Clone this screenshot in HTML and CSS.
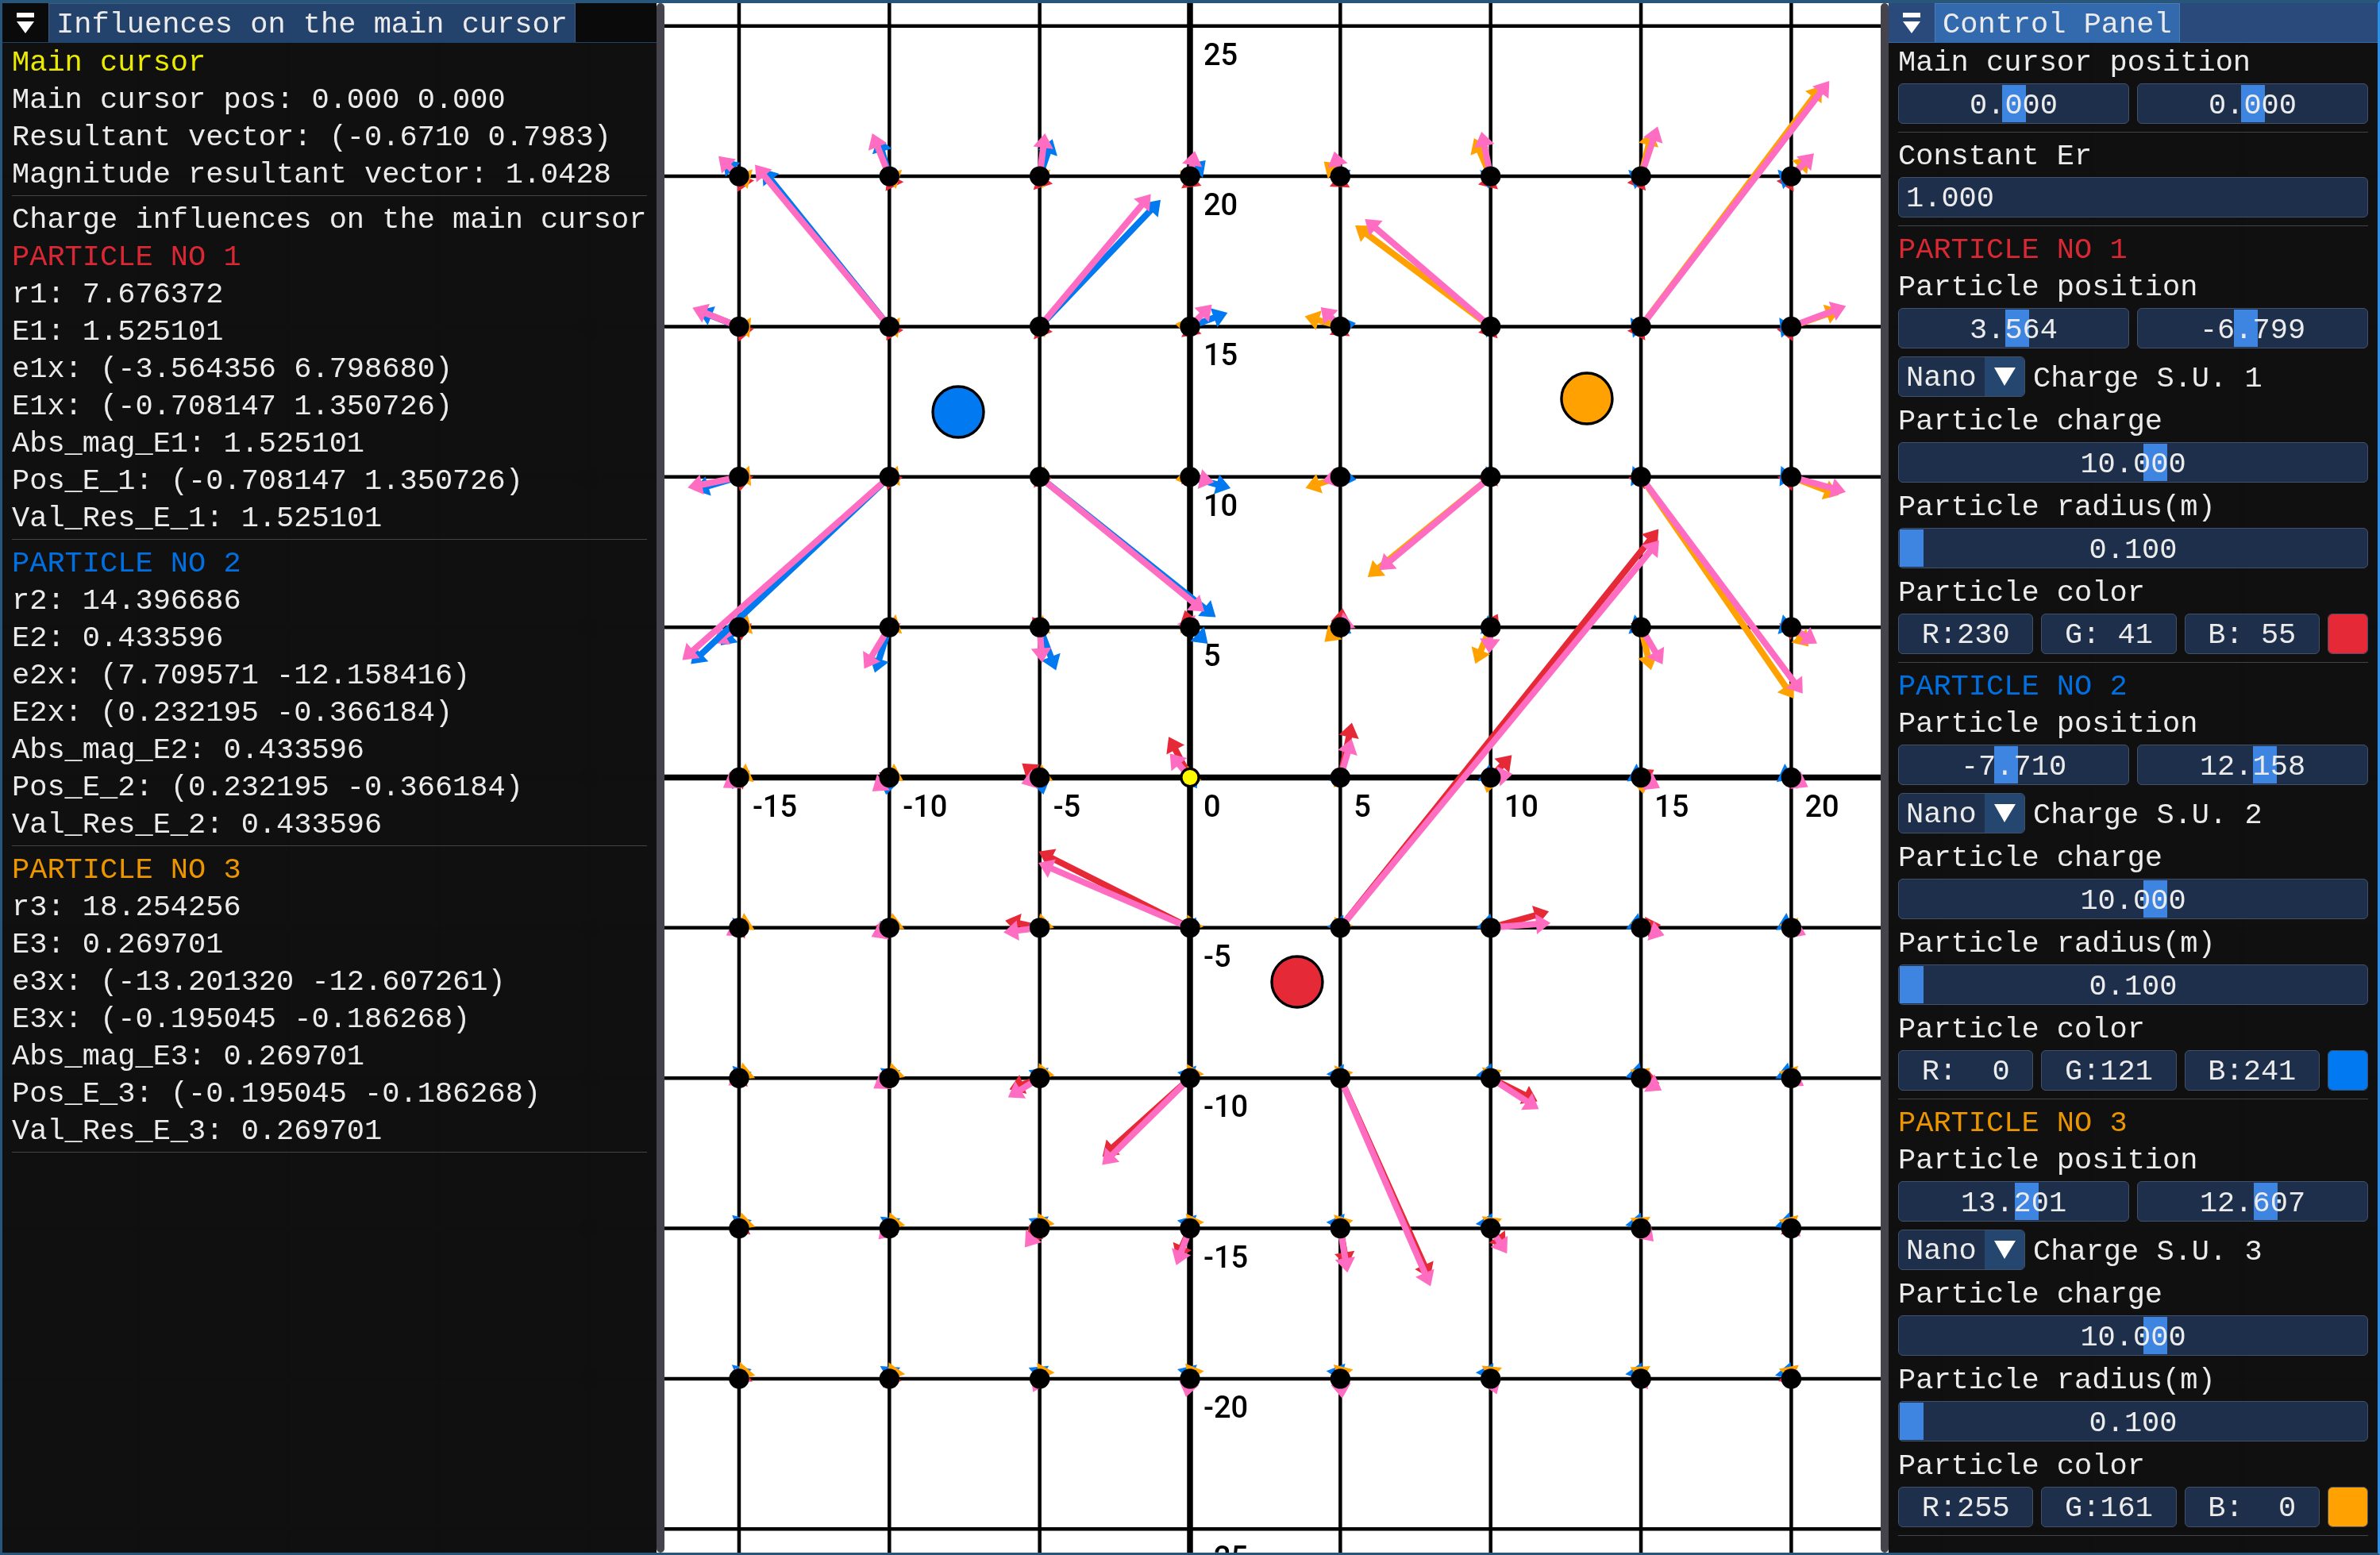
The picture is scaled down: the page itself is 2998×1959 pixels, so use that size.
FILE: index.html
```html
<!DOCTYPE html>
<html lang="en">
<head>
<meta charset="utf-8">
<title>Electric field</title>
<link rel="stylesheet" href="styles.css">
</head>
<body>
<svg class="field" id="field" role="img" aria-label="Electric field of three charges"></svg>
<main class="dock">
  <section class="panel">
    <header class="titlebar">
      <button class="menu" aria-label="Window menu"><svg width="22" height="26" viewBox="0 0 22 26"><path d="M0 0h22v6H0zM0 11h22L11 26z" fill="#fff"/></svg></button>
      <button class="tab">Influences on the main cursor</button>
    </header>
    <div class="content">
      <p class="yellow">Main cursor</p>
      <p>Main cursor pos: 0.000 0.000</p>
      <p>Resultant vector: (-0.6710 0.7983)</p>
      <p>Magnitude resultant vector: 1.0428</p>
      <hr>
      <p>Charge influences on the main cursor</p>
      <p class="red">PARTICLE NO 1</p>
      <p>r1: 7.676372</p>
      <p>E1: 1.525101</p>
      <p>e1x: (-3.564356 6.798680)</p>
      <p>E1x: (-0.708147 1.350726)</p>
      <p>Abs_mag_E1: 1.525101</p>
      <p>Pos_E_1: (-0.708147 1.350726)</p>
      <p>Val_Res_E_1: 1.525101</p>
      <hr>
      <p class="blue">PARTICLE NO 2</p>
      <p>r2: 14.396686</p>
      <p>E2: 0.433596</p>
      <p>e2x: (7.709571 -12.158416)</p>
      <p>E2x: (0.232195 -0.366184)</p>
      <p>Abs_mag_E2: 0.433596</p>
      <p>Pos_E_2: (0.232195 -0.366184)</p>
      <p>Val_Res_E_2: 0.433596</p>
      <hr>
      <p class="orange">PARTICLE NO 3</p>
      <p>r3: 18.254256</p>
      <p>E3: 0.269701</p>
      <p>e3x: (-13.201320 -12.607261)</p>
      <p>E3x: (-0.195045 -0.186268)</p>
      <p>Abs_mag_E3: 0.269701</p>
      <p>Pos_E_3: (-0.195045 -0.186268)</p>
      <p>Val_Res_E_3: 0.269701</p>
      <hr>
    </div>
  </section>
  <div class="splitter"></div>
  <div class="view"></div>
  <div class="splitter"></div>
  <section class="panel active">
    <header class="titlebar">
      <button class="menu" aria-label="Window menu"><svg width="22" height="26" viewBox="0 0 22 26"><path d="M0 0h22v6H0zM0 11h22L11 26z" fill="#fff"/></svg></button>
      <button class="tab">Control Panel</button>
    </header>
    <form class="content">
      <label for="cx">Main cursor position</label>
      <div class="pair">
        <div class="slider"><input id="cx" type="range" min="-100" max="100" step="0.001" value="0"><output for="cx">0.000</output></div>
        <div class="slider"><input id="cy" aria-label="Main cursor y" type="range" min="-100" max="100" step="0.001" value="0"><output for="cy">0.000</output></div>
      </div>
      <hr>
      <label for="er">Constant Er</label>
      <input id="er" class="box" type="text" value="1.000">
      <hr>

      <p class="red">PARTICLE NO 1</p>
      <label for="x1">Particle position</label>
      <div class="pair">
        <div class="slider"><input id="x1" type="range" min="-100" max="100" step="0.001" value="3.564"><output for="x1">3.564</output></div>
        <div class="slider"><input id="y1" aria-label="Particle 1 y" type="range" min="-100" max="100" step="0.001" value="-6.799"><output for="y1">-6.799</output></div>
      </div>
      <div class="unit">
        <div class="combo"><select id="u1"><option>Nano</option></select><svg class="arrow" viewBox="0 0 50 49"><path d="M12 13h27L25 36z" fill="#fff"/></svg></div>
        <label for="u1">Charge S.U. 1</label>
      </div>
      <label for="q1">Particle charge</label>
      <div class="slider"><input id="q1" type="range" min="-100" max="100" step="0.001" value="10"><output for="q1">10.000</output></div>
      <label for="r1">Particle radius(m)</label>
      <div class="slider"><input id="r1" type="range" min="0.1" max="10" step="0.001" value="0.1"><output for="r1">0.100</output></div>
      <label for="c1">Particle color</label>
      <div class="color">
        <input class="box" aria-label="Red" value="R:230"><input class="box" aria-label="Green" value="G: 41"><input class="box" aria-label="Blue" value="B: 55">
        <input id="c1" class="swatch" type="color" value="#e62937">
      </div>
      <hr>

      <p class="blue">PARTICLE NO 2</p>
      <label for="x2">Particle position</label>
      <div class="pair">
        <div class="slider"><input id="x2" type="range" min="-100" max="100" step="0.001" value="-7.71"><output for="x2">-7.710</output></div>
        <div class="slider"><input id="y2" aria-label="Particle 2 y" type="range" min="-100" max="100" step="0.001" value="12.158"><output for="y2">12.158</output></div>
      </div>
      <div class="unit">
        <div class="combo"><select id="u2"><option>Nano</option></select><svg class="arrow" viewBox="0 0 50 49"><path d="M12 13h27L25 36z" fill="#fff"/></svg></div>
        <label for="u2">Charge S.U. 2</label>
      </div>
      <label for="q2">Particle charge</label>
      <div class="slider"><input id="q2" type="range" min="-100" max="100" step="0.001" value="10"><output for="q2">10.000</output></div>
      <label for="r2">Particle radius(m)</label>
      <div class="slider"><input id="r2" type="range" min="0.1" max="10" step="0.001" value="0.1"><output for="r2">0.100</output></div>
      <label for="c2">Particle color</label>
      <div class="color">
        <input class="box" aria-label="Red" value="R:  0"><input class="box" aria-label="Green" value="G:121"><input class="box" aria-label="Blue" value="B:241">
        <input id="c2" class="swatch" type="color" value="#0079f1">
      </div>
      <hr>

      <p class="orange">PARTICLE NO 3</p>
      <label for="x3">Particle position</label>
      <div class="pair">
        <div class="slider"><input id="x3" type="range" min="-100" max="100" step="0.001" value="13.201"><output for="x3">13.201</output></div>
        <div class="slider"><input id="y3" aria-label="Particle 3 y" type="range" min="-100" max="100" step="0.001" value="12.607"><output for="y3">12.607</output></div>
      </div>
      <div class="unit">
        <div class="combo"><select id="u3"><option>Nano</option></select><svg class="arrow" viewBox="0 0 50 49"><path d="M12 13h27L25 36z" fill="#fff"/></svg></div>
        <label for="u3">Charge S.U. 3</label>
      </div>
      <label for="q3">Particle charge</label>
      <div class="slider"><input id="q3" type="range" min="-100" max="100" step="0.001" value="10"><output for="q3">10.000</output></div>
      <label for="r3">Particle radius(m)</label>
      <div class="slider"><input id="r3" type="range" min="0.1" max="10" step="0.001" value="0.1"><output for="r3">0.100</output></div>
      <label for="c3">Particle color</label>
      <div class="color">
        <input class="box" aria-label="Red" value="R:255"><input class="box" aria-label="Green" value="G:161"><input class="box" aria-label="Blue" value="B:  0">
        <input id="c3" class="swatch" type="color" value="#ffa100">
      </div>
      <hr>
    </form>
  </section>
</main>
<script src="script.js"></script>
</body>
</html>
```
FILE: styles.css
```css
* { box-sizing: border-box; }
body {
  margin: 0;
  background: #fff;
  color: #ebebeb;
  font: 37px/42px "Liberation Mono", monospace;
}
button, input, select, output { font: inherit; color: inherit; }

.field {
  position: fixed;
  inset: 0;
  width: 100%;
  height: 100%;
}
.field text { font: 500 38px Roboto, sans-serif; fill: #000; }

.dock {
  position: relative;
  display: grid;
  grid-template-columns: 824px 10px 1fr 10px 616px;
  min-height: 100vh;
  border: 3px solid #28557a;
  border-top-width: 4px;
  border-right-color: #2b90ea;
}
.splitter { background: #45444d; border-radius: 5px; }

.panel { background: rgba(15, 15, 15, 0.995); min-width: 0; }
.titlebar {
  display: flex;
  height: 50px;
  background: #0a0a0a;
  border-bottom: 1px solid #23426c;
}
.menu {
  width: 58px;
  padding: 0;
  border: 0;
  background: none;
  display: flex;
  align-items: center;
  justify-content: center;
}
.tab {
  height: 49px;
  padding: 3px 9px 0;
  border: 1px solid #405a80;
  border-bottom: 0;
  background: #23426c;
  line-height: 46px;
  white-space: pre;
}
.active .titlebar { background: #294a7a; border-color: #3369ad; }
.active .tab { background: #3369ad; border-color: #4d7db9; }

.content { padding: 4px 12px 0; }
.content > p, .content > label {
  display: block;
  margin: 0 0 5px;
  white-space: pre;
}
hr {
  height: 1px;
  margin: 0 0 9px;
  border: 0;
  background: #43434a;
}
.yellow { color: #ebeb00; }
.red { color: #d82834; }
.blue { color: #0070e0; }
.orange { color: #eb9500; }

.pair { display: grid; grid-template-columns: 1fr 1fr; gap: 10px; }
.slider { position: relative; height: 51px; margin-bottom: 10px; }
.slider input {
  appearance: none;
  display: block;
  width: 100%;
  height: 51px;
  margin: 0;
  padding: 1px;
  background: #1d2f4a;
  border: 1px solid #43506a;
  border-radius: 6px;
}
.slider input::-webkit-slider-thumb {
  appearance: none;
  width: 30px;
  height: 47px;
  background: #3d85e0;
}
.slider output {
  position: absolute;
  inset: 0;
  padding-top: 4px;
  line-height: 48px;
  text-align: center;
  pointer-events: none;
}
.box {
  display: block;
  width: 100%;
  min-width: 0;
  height: 51px;
  margin: 0 0 10px;
  padding: 3px 9px 0;
  background: #1d2f4a;
  border: 1px solid #43506a;
  border-radius: 6px;
}
.color { display: grid; grid-template-columns: 1fr 1fr 1fr 51px; gap: 10px; }
.color .box { text-align: center; }
.swatch {
  appearance: none;
  width: 51px;
  height: 51px;
  padding: 0;
  border: 1px solid #43506a;
  border-radius: 6px;
  overflow: hidden;
  background: none;
}
.swatch::-webkit-color-swatch-wrapper { padding: 0; }
.swatch::-webkit-color-swatch { border: 0; }

.unit { display: flex; gap: 10px; height: 51px; margin-bottom: 10px; }
.unit label { padding-top: 7px; white-space: pre; }
.combo { position: relative; width: 160px; }
.combo select {
  appearance: none;
  width: 100%;
  height: 51px;
  padding: 3px 0 0 9px;
  background: #1d2f4a;
  border: 1px solid #43506a;
  border-radius: 6px;
}
.arrow {
  position: absolute;
  top: 1px;
  right: 1px;
  width: 50px;
  height: 49px;
  background: #24466f;
  border-radius: 0 5px 5px 0;
  pointer-events: none;
}
```
FILE: script.js
```js
// Pixels per metre, and Coulomb constant times 10 nC.
const UNIT = 37.87;
const KQ = 89.87;
const HEAD_LENGTH = 18.3;
const HEAD_HALF = 12.8;

const charges = [
  { x: 3.564356, y: -6.79868, color: '#e62937' },
  { x: -7.709571, y: 12.158416, color: '#0079f1' },
  { x: 13.20132, y: 12.607261, color: '#ffa100' },
];

const px = (v) => (v * UNIT).toFixed(2);

function arrow(x, y, ex, ey, color) {
  const len = Math.hypot(ex, ey) * UNIT;
  const angle = -Math.atan2(ey, ex) * 180 / Math.PI;
  const back = len - HEAD_LENGTH;
  const shaft = back > 0 ? `M0 -4H${back + 1}V4H0z` : '';
  return `<path transform="translate(${px(x)} ${px(-y)}) rotate(${angle})" fill="${color}" ` +
    `d="${shaft}M${len} 0L${back} ${HEAD_HALF}V${-HEAD_HALF}z"/>`;
}

function draw() {
  let out = '';
  for (let i = -45; i <= 45; i += 5) {
    const w = i === 0 ? 7.5 : 4.5;
    out += `<path d="M${px(i)} -3000V3000M-3000 ${px(i)}H3000" stroke="#000" stroke-width="${w}"/>`;
  }
  for (let i = -15; i <= 20; i += 5) {
    out += `<text x="${i * UNIT + 17}" y="49">${i}</text>`;
  }
  for (let i = -25; i <= 25; i += 5) {
    if (i !== 0) out += `<text x="17" y="${-i * UNIT + 49}">${i}</text>`;
  }
  let dots = '';
  for (let x = -20; x <= 20; x += 5) {
    for (let y = -20; y <= 20; y += 5) {
      let sx = 0;
      let sy = 0;
      for (const c of charges) {
        const dx = x - c.x;
        const dy = y - c.y;
        const r = Math.hypot(dx, dy);
        const ex = KQ * dx / r ** 3;
        const ey = KQ * dy / r ** 3;
        sx += ex;
        sy += ey;
        out += arrow(x, y, ex, ey, c.color);
      }
      out += arrow(x, y, sx, sy, '#ff6dc2');
      dots += `<circle cx="${px(x)}" cy="${px(-y)}" r="12.7"/>`;
    }
  }
  out += dots + '<circle r="9.4" fill="#fff900"/>';
  for (const c of charges) {
    out += `<circle cx="${px(c.x)}" cy="${px(-c.y)}" r="32" fill="${c.color}" stroke="#000" stroke-width="3.4"/>`;
  }
  document.getElementById('field').innerHTML =
    `<svg x="50%" y="50%" overflow="visible">${out}</svg>`;
}

draw();
```
